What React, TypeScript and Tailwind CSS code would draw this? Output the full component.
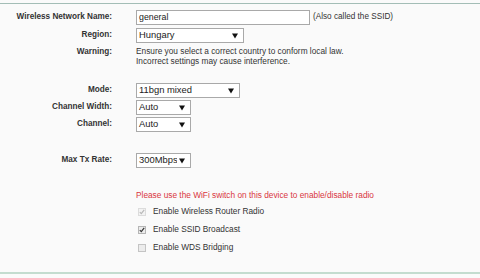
import React from "react";

const font = { fontFamily: '"Liberation Sans", Arial, sans-serif' };

function Arrow() {
  return (
    <svg width="6" height="6" viewBox="0 0 6 6" className="shrink-0">
      <path d="M0 0.5 H6 L3 5.5 Z" fill="#111" />
    </svg>
  );
}

function Select({ value, w }: { value: string; w: string }) {
  return (
    <div className={`${w} h-[15px] bg-white border border-[#a9a9a9] flex items-center pl-[2px] relative overflow-hidden`}>
      <span className="text-[9.4px] text-[#222] whitespace-nowrap">{value}</span>
      <div className="absolute top-0 bottom-0 right-0 w-[13px] pl-[2px] bg-white flex items-center">
        <Arrow />
      </div>
    </div>
  );
}

function Label({ children }: { children: React.ReactNode }) {
  return <div className="w-[112px] text-right font-bold text-[8.2px] text-[#333] shrink-0">{children}</div>;
}

function Check({ state }: { state: "disabled" | "checked" | "off" }) {
  const box =
    state === "disabled"
      ? "bg-[#f3f3f3] border-[#dcdcdc]"
      : state === "checked"
      ? "bg-[#ececec] border-[#b5b5b5]"
      : "bg-[#ececec] border-[#c4c4c4]";
  return (
    <div className={`w-[8px] h-[8px] border ${box} flex items-center justify-center shrink-0`}>
      {state !== "off" && (
        <svg width="6" height="6" viewBox="0 0 6 6">
          <path d="M0.8 3.2 L2.3 4.7 L5.2 0.9" stroke={state === "disabled" ? "#b8b8b8" : "#333"} strokeWidth="1.2" fill="none" />
        </svg>
      )}
    </div>
  );
}

export default function App() {
  return (
    <div className="w-[480px] h-[278px] bg-[#fafafa] overflow-hidden flex flex-col" style={font}>
      <div className="mt-[3px] h-[1px] bg-[#a3bdb6]" />
      <div className="flex flex-col pt-[6px]">
        <div className="flex items-center h-[15px]">
          <Label>Wireless Network Name:</Label>
          <div className="ml-[24px] w-[174px] h-[15px] bg-white border border-[#a9a9a9] flex items-center pl-[2px] text-[8.8px] text-[#222]">
            general
          </div>
          <span className="ml-[3px] text-[8.2px] text-[#333]">(Also called the SSID)</span>
        </div>
        <div className="flex items-center h-[15px] mt-[3px]">
          <Label>Region:</Label>
          <div className="ml-[24px]">
            <Select value="Hungary" w="w-[108px]" />
          </div>
        </div>
        <div className="flex items-start mt-[3px]">
          <Label>Warning:</Label>
          <div className="ml-[24px] text-[8.3px] leading-[10px] text-[#333]">
            <div>Ensure you select a correct country to conform local law.</div>
            <div>Incorrect settings may cause interference.</div>
          </div>
        </div>
        <div className="flex items-center h-[15px] mt-[17px]">
          <Label>Mode:</Label>
          <div className="ml-[24px]">
            <Select value="11bgn mixed" w="w-[104px]" />
          </div>
        </div>
        <div className="flex items-center h-[15px] mt-[2px]">
          <Label>Channel Width:</Label>
          <div className="ml-[24px]">
            <Select value="Auto" w="w-[55px]" />
          </div>
        </div>
        <div className="flex items-center h-[15px] mt-[2px]">
          <Label>Channel:</Label>
          <div className="ml-[24px]">
            <Select value="Auto" w="w-[55px]" />
          </div>
        </div>
        <div className="flex items-center h-[15px] mt-[21px]">
          <Label>Max Tx Rate:</Label>
          <div className="ml-[24px]">
            <Select value="300Mbps" w="w-[55px]" />
          </div>
        </div>
        <div className="ml-[136px] mt-[22px] text-[8.3px] leading-[10px] text-[#d9363e]">
          Please use the WiFi switch on this device to enable/disable radio
        </div>
        <div className="ml-[138px] mt-[7px] flex flex-col gap-[9px]">
          <div className="flex items-center gap-[7px] h-[9px]">
            <Check state="disabled" />
            <span className="text-[8.3px] text-[#333]">Enable Wireless Router Radio</span>
          </div>
          <div className="flex items-center gap-[7px] h-[9px]">
            <Check state="checked" />
            <span className="text-[8.3px] text-[#333]">Enable SSID Broadcast</span>
          </div>
          <div className="flex items-center gap-[7px] h-[9px]">
            <Check state="off" />
            <span className="text-[8.3px] text-[#333]">Enable WDS Bridging</span>
          </div>
        </div>
      </div>
      <div className="mt-auto mb-[4px] h-[2px] bg-[#c3dccf]" />
    </div>
  );
}
